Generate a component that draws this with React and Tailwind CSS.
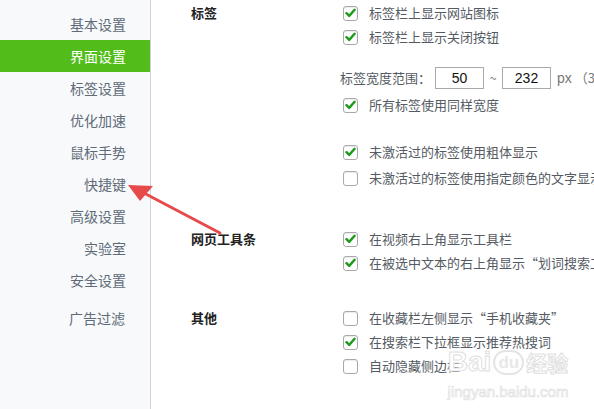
import React from 'react';

const navItems = ['基本设置', '界面设置', '标签设置', '优化加速', '鼠标手势', '快捷键', '高级设置', '实验室', '安全设置'];

const Check = ({ checked }) => (
	<span className="w-[15px] h-[15px] mr-[11px] shrink-0 rounded-[3px] border border-[#a9a9a9] bg-white flex items-center justify-center shadow-[inset_0_1px_1px_rgba(0,0,0,0.08)]">
		{checked && (
			<svg width="11" height="10" viewBox="0 0 11 10">
				<path d="M1.5 5.2 L4.2 7.9 L9.6 1.8" fill="none" stroke="#1b9a1b" strokeWidth="2.4" strokeLinecap="round" strokeLinejoin="round" />
			</svg>
		)}
	</span>
);

const Row = ({ checked, children, className = '' }) => (
	<div className={`h-[24px] flex items-center ${className}`}>
		<Check checked={checked} />
		<span className="text-[13px] text-[#555b63]">{children}</span>
	</div>
);

const Section = ({ title, className = '', children }) => (
	<div className={`flex ${className}`}>
		<div className="w-[152px] shrink-0 h-[24px] flex items-center text-[13px] font-bold text-[#222]">{title}</div>
		<div className="flex flex-col">{children}</div>
	</div>
);

const arial = { fontFamily: '"Liberation Sans", Arial, sans-serif' };

export default function App() {
	return (
		<div
			className="relative w-[594px] h-[409px] overflow-hidden bg-white flex"
			style={{ fontFamily: '"Noto Sans CJK SC", "Noto Sans", sans-serif' }}
		>
			{/* Sidebar */}
			<div className="w-[151px] shrink-0 h-full bg-[#f7f9fb] border-r border-[#cdd2d8] pt-[8px] flex flex-col">
				{navItems.map((item, i) => (
					<div
						key={item}
						className={`h-[32px] flex items-center justify-end pr-[24px] text-[14px] ${
							i === 1 ? 'bg-[#52bd1a] text-white' : 'text-[#5f6b78]'
						}`}
					>
						{item}
					</div>
				))}
				<div className="h-[32px] mt-[6px] flex items-center justify-end pr-[25px] text-[14px] text-[#5f6b78]">广告过滤</div>
			</div>

			{/* Content */}
			<div className="flex-1 pl-[40px] pt-[1px] whitespace-nowrap overflow-hidden">
				<Section title="标签">
					<Row checked>标签栏上显示网站图标</Row>
					<Row checked>标签栏上显示关闭按钮</Row>
					<div className="h-[22px] mt-[18px] -ml-[3px] flex items-center text-[13px] text-[#555b63]">
						<span className="shrink-0 w-[95px] overflow-hidden">标签宽度范围：</span>
						<span className="shrink-0 w-[49px] h-[22px] border border-[#a9a9a9] flex items-center justify-center text-[14px] text-[#111]" style={arial}>50</span>
						<span className="shrink-0 w-[18px] text-center text-[#888]">~</span>
						<span className="shrink-0 w-[49px] h-[22px] border border-[#a9a9a9] flex items-center justify-center text-[14px] text-[#111]" style={arial}>232</span>
						<span className="shrink-0 ml-[6px] text-[14px] text-[#777]" style={arial}>px</span>
						<span className="shrink-0 ml-[3px] text-[#777]">（32~300）</span>
					</div>
					<Row checked className="mt-[4px]">所有标签使用同样宽度</Row>
					<Row checked className="mt-[23px]">未激活过的标签使用粗体显示</Row>
					<Row checked={false} className="mt-[2px]">未激活过的标签使用指定颜色的文字显示</Row>
				</Section>

				<Section title="网页工具条" className="mt-[37px]">
					<Row checked>在视频右上角显示工具栏</Row>
					<Row checked>在被选中文本的右上角显示“划词搜索工具栏”</Row>
				</Section>

				<Section title="其他" className="mt-[31px]">
					<Row checked={false}>在收藏栏左侧显示“手机收藏夹”</Row>
					<Row checked>在搜索栏下拉框显示推荐热搜词</Row>
					<Row checked={false}>自动隐藏侧边栏</Row>
				</Section>
			</div>

			{/* Watermark */}
			<div className="absolute left-[452px] top-[348px] w-[112px] flex flex-col items-center whitespace-nowrap pointer-events-none">
				<div className="flex items-center leading-none font-bold text-white">
					<span className="text-[28px]" style={{ ...arial, WebkitTextStroke: '1px #e0e0e0' }}>Bai</span>
					<span className="text-[17px] mx-[2px] px-[3px] py-[2px] rounded-full border-2 border-[#e4e4e4] text-[#e8e8e8]" style={arial}>du</span>
					<span className="text-[21px] text-white" style={{ WebkitTextStroke: '1px #e0e0e0' }}>经验</span>
				</div>
				<div className="mt-[8px] text-[15px] leading-none text-white" style={{ ...arial, WebkitTextStroke: '0.7px #e0e0e0' }}>jingyan.baidu.com</div>
			</div>

			{/* Red arrow */}
			<svg className="absolute left-0 top-0 pointer-events-none" width="594" height="409" viewBox="0 0 594 409">
				<line x1="220" y1="233" x2="142" y2="192" stroke="#e64a4a" strokeWidth="3" strokeLinecap="round" />
				<polygon points="128,185 153,186 140,201" fill="#e64a4a" />
			</svg>
		</div>
	);
}
